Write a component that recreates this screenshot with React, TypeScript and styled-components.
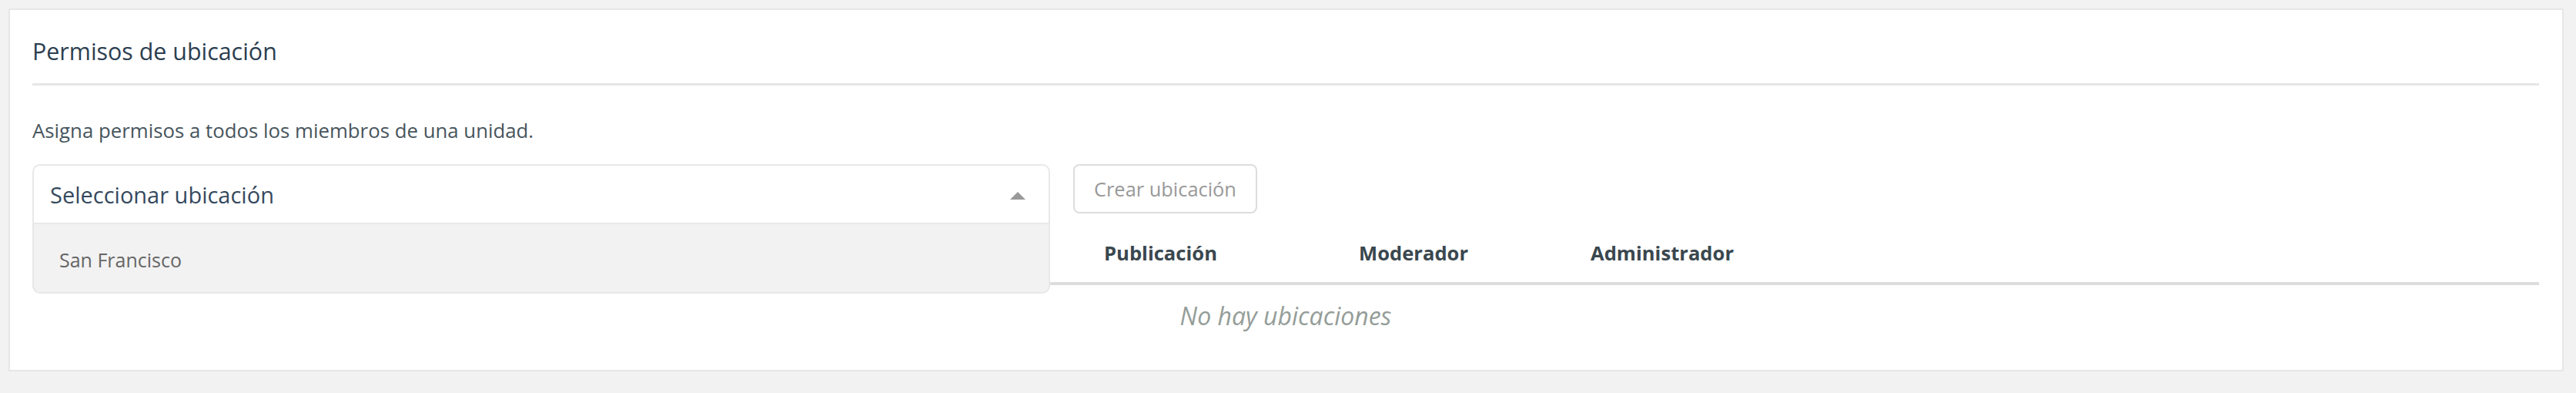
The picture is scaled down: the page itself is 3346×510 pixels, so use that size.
import styled, { createGlobalStyle } from 'styled-components';
import { FC } from 'react';

type Column = {
	label: string;
	width: string;
}

const columns: Column[] = [
	{ label: '', width: '1392px' },
	{ label: 'Publicación', width: '331px' },
	{ label: 'Moderador', width: '301px' },
	{ label: 'Administrador', width: '1fr' },
];

const locations: string[] = ['San Francisco'];

const GlobalStyle = createGlobalStyle`
	body {
		margin: 0;
		background: #f2f2f2;
		font-family: "Open Sans", "Noto Sans", sans-serif;
	}
`

const LocationSelect: FC<{ options: string[] }> = ({ options }) => (
	<SSelectWrapper>
		<SSelectControl>
			<span>Seleccionar ubicación</span>
			<SArrow />
		</SSelectControl>
		<SMenu>
			{options.map((name) => (
				<SOption key={name}>{name}</SOption>
			))}
		</SMenu>
	</SSelectWrapper>
)

const App: FC = () => {
	return (
		<>
			<GlobalStyle />
			<SPage>
				<SCard>
					<SHeader>
						<STitle>Permisos de ubicación</STitle>
					</SHeader>
					<SDescription>Asigna permisos a todos los miembros de una unidad.</SDescription>
					<SToolbar>
						<LocationSelect options={locations} />
						<SButton type='button'>Crear ubicación</SButton>
					</SToolbar>
					<STable>
						<SHeadRow $template={columns.map((c) => c.width).join(' ')}>
							{columns.map((c, i) => (
								<SHeadCell key={i}>{c.label}</SHeadCell>
							))}
						</SHeadRow>
						<SEmpty>No hay ubicaciones</SEmpty>
					</STable>
				</SCard>
			</SPage>
		</>
	)
}

export default App;

const SPage = styled.div`
	padding: 11px 16px 0 11px;
`
const SCard = styled.section`
	background: #fff;
	border: 2px solid #e6e6e6;
	padding: 0 30px 30px 29px;
`
const SHeader = styled.div`
	padding: 34px 0 21px;
	border-bottom: 3px solid #e6e6e6;
`
const STitle = styled.h2`
	margin: 0;
	font-size: 30.4px;
	line-height: 40px;
	font-weight: 400;
	color: #2c3e50;
`
const SDescription = styled.p`
	margin: 40px 0 0;
	font-size: 25.8px;
	line-height: 36px;
	color: #47555d;
`
const SToolbar = styled.div`
	margin-top: 26px;
	display: flex;
	align-items: flex-start;
	gap: 30px;
`
const SSelectWrapper = styled.div`
	position: relative;
	width: 1322px;
`
const SSelectControl = styled.div`
	box-sizing: border-box;
	height: 78px;
	display: flex;
	align-items: center;
	justify-content: space-between;
	padding: 0 30px 0 21px;
	border: 2px solid #e8e8e8;
	border-radius: 10px 10px 0 0;
	background: #fff;
	font-size: 29px;
	color: #35495e;
`
const SArrow = styled.span`
	width: 0;
	height: 0;
	margin-top: 4px;
	border-left: 10px solid transparent;
	border-right: 10px solid transparent;
	border-bottom: 10px solid #999;
`
const SMenu = styled.ul`
	position: absolute;
	top: 100%;
	left: 0;
	right: 0;
	z-index: 2;
	margin: 0;
	padding: 0;
	list-style: none;
	box-sizing: border-box;
	background: #f2f2f2;
	border: 2px solid #e8e8e8;
	border-top: none;
	border-radius: 0 0 10px 10px;
`
const SOption = styled.li`
	height: 88px;
	display: flex;
	align-items: center;
	padding: 4px 33px 0;
	box-sizing: border-box;
	font-size: 25px;
	color: #666;
`
const SButton = styled.button`
	height: 64px;
	padding: 0 25px;
	border: 2px solid #ddd;
	border-radius: 8px;
	background: #fff;
	color: #999;
	font-family: inherit;
	font-size: 25.4px;
	cursor: default;
`
const STable = styled.div`
	margin-top: 20px;
`
const SHeadRow = styled.div<{ $template: string }>`
	display: grid;
	grid-template-columns: ${(p) => p.$template};
	padding-bottom: 19px;
	border-bottom: 4px solid #ddd;
`
const SHeadCell = styled.div`
	font-size: 25.6px;
	line-height: 36px;
	font-weight: 700;
	color: #3a474e;
`
const SEmpty = styled.div`
	padding: 19px 0;
	text-align: center;
	font-size: 32px;
	line-height: 42px;
	font-style: italic;
	color: #959d99;
`
